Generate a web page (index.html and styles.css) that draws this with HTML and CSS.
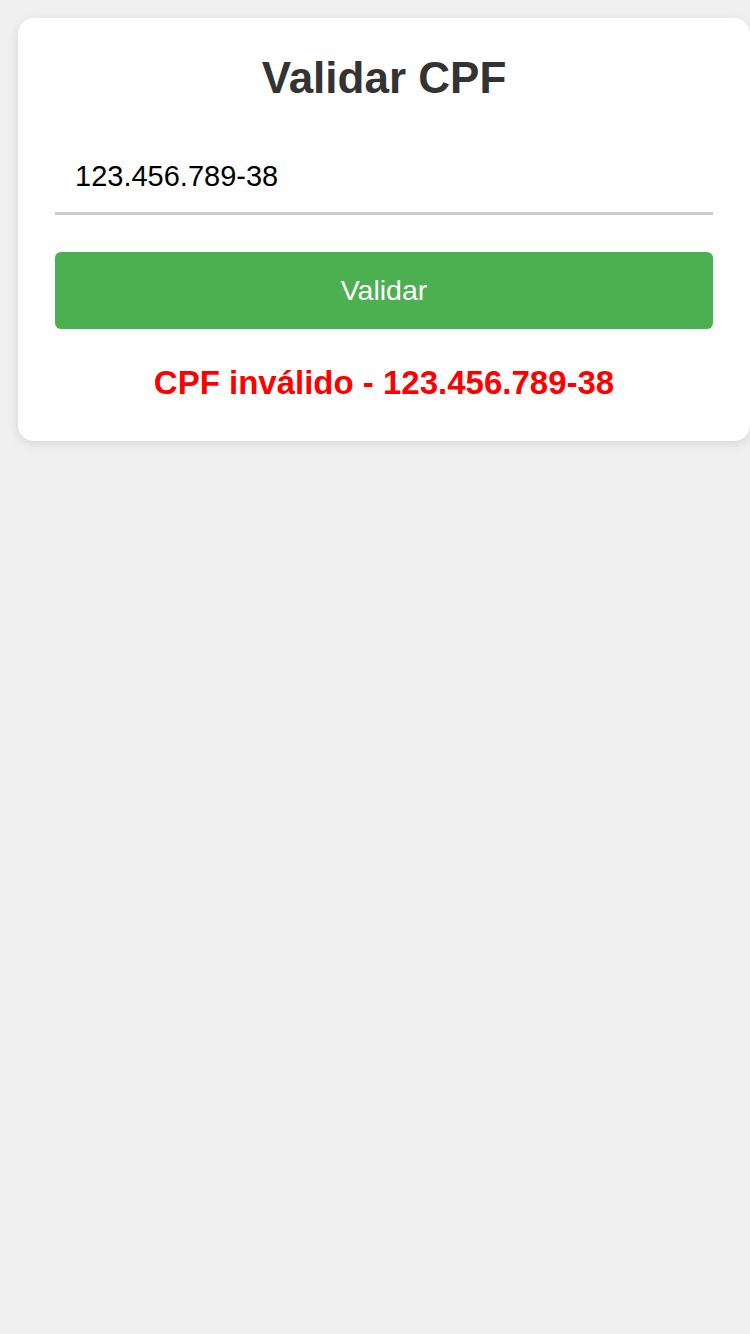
FILE: index.html
```html
<!DOCTYPE html>
<html lang="pt-BR">
<head>
<meta charset="utf-8">
<title>Validar CPF</title>
<link rel="stylesheet" href="styles.css">
</head>
<body>
<main class="page">
  <section class="card">
    <h1 class="title">Validar CPF</h1>
    <input class="cpf-input" type="text" value="123.456.789-38">
    <button class="btn" type="button">Validar</button>
    <p class="result">CPF inválido - 123.456.789-38</p>
  </section>
</main>
</body>
</html>
```
FILE: styles.css
```css
html, body {
  margin: 0;
  padding: 0;
  background: #f0f0f0;
  font-family: "Liberation Sans", Arial, sans-serif;
}

.page {
  padding: 18px 0 18px 18px;
}

.card {
  box-sizing: border-box;
  width: 732px;
  background: #fff;
  border-radius: 16px;
  box-shadow: 0 3px 12px rgba(0, 0, 0, 0.1);
  padding: 35px 37px 39px;
  display: flex;
  flex-direction: column;
}

.title {
  margin: 0 0 38px;
  font-size: 44px;
  font-weight: bold;
  color: #333;
  text-align: center;
  line-height: normal;
}

.cpf-input {
  box-sizing: border-box;
  width: 100%;
  margin: 0;
  border: none;
  border-bottom: 3px solid #ccc;
  padding: 19px 20px 19px;
  font-family: "Liberation Sans", Arial, sans-serif;
  font-size: 29px;
  line-height: normal;
  color: #000;
  background: transparent;
  outline: none;
}

.btn {
  margin: 37px 0 0;
  height: 77px;
  border: none;
  border-radius: 6px;
  background: #4caf50;
  color: #fff;
  font-family: "Liberation Sans", Arial, sans-serif;
  font-size: 28.5px;
  cursor: pointer;
}

.result {
  margin: 35px 0 0;
  font-size: 33px;
  font-weight: bold;
  color: #ff0000;
  text-align: center;
  line-height: normal;
}
```
